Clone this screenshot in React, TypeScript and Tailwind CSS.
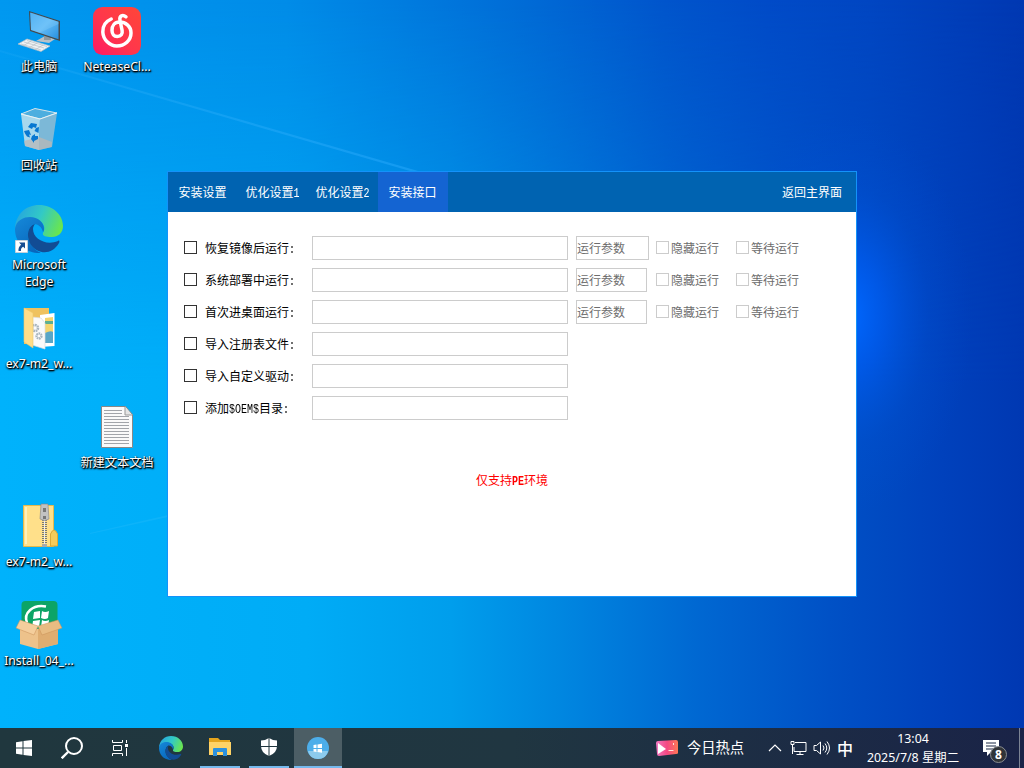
import React from "react";

type IconProps = { className?: string };

function Wallpaper() {
  return (
    <svg className="absolute inset-0 h-full w-full" viewBox="0 0 1024 768" preserveAspectRatio="none" aria-hidden="true">
      <defs>
        <linearGradient id="wTop" x1="0" x2="1" y1="0" y2="0">
          <stop offset="0" stopColor="#0098f0" />
          <stop offset="0.28" stopColor="#008ce8" />
          <stop offset="0.5" stopColor="#006dd7" />
          <stop offset="0.65" stopColor="#0055cc" />
          <stop offset="0.75" stopColor="#004bc8" />
          <stop offset="0.85" stopColor="#0046c2" />
          <stop offset="1" stopColor="#0038b2" />
        </linearGradient>
        <linearGradient id="wBottom" x1="0" x2="1" y1="0" y2="0">
          <stop offset="0" stopColor="#00b2fc" />
          <stop offset="0.3" stopColor="#00acf6" />
          <stop offset="0.44" stopColor="#009eec" />
          <stop offset="0.55" stopColor="#0086e0" />
          <stop offset="0.68" stopColor="#0068d2" />
          <stop offset="0.81" stopColor="#0051c6" />
          <stop offset="0.92" stopColor="#0041bc" />
          <stop offset="1" stopColor="#0038b2" />
        </linearGradient>
        <linearGradient id="wFade" x1="0" x2="0" y1="0" y2="1">
          <stop offset="0" stopColor="#000" />
          <stop offset="0.5" stopColor="#fff" />
        </linearGradient>
        <mask id="wMask"><rect width="1024" height="768" fill="url(#wFade)" /></mask>
        <radialGradient id="wGlow">
          <stop offset="0" stopColor="#0068ff" />
          <stop offset="0.3" stopColor="#0060fa" stopOpacity="0.6" />
          <stop offset="0.65" stopColor="#0056e0" stopOpacity="0.2" />
          <stop offset="1" stopColor="#0050d8" stopOpacity="0" />
        </radialGradient>
        <linearGradient id="wBeam" x1="0" x2="1" y1="0" y2="0">
          <stop offset="0" stopColor="#5cc4ff" stopOpacity="0.08" />
          <stop offset="1" stopColor="#2cacff" stopOpacity="0.45" />
        </linearGradient>
      </defs>
      <rect width="1024" height="768" fill="url(#wTop)" />
      <rect width="1024" height="768" fill="url(#wBottom)" mask="url(#wMask)" />
      <ellipse cx="848" cy="315" rx="125" ry="200" fill="url(#wGlow)" />
      <path d="M0 50 418 171H410L0 52Z" fill="url(#wBeam)" />
      <path d="M90 533 168 515V517L90 534Z" fill="#5cd0ff" opacity="0.14" />
    </svg>
  );
}

function ComputerIcon() {
  return (
    <svg viewBox="0 0 48 48" className="h-12 w-12">
      <defs><linearGradient id="pcS" x1="0" y1="0" x2="1" y2="1"><stop offset="0" stopColor="#3ba5ef" /><stop offset=".5" stopColor="#63bcf7" /><stop offset="1" stopColor="#268fe0" /></linearGradient></defs>
      <path d="m21 34 9-5 10 3-6 4Z" fill="#b9c1c7" /><path d="M29 26h6l1 7h-7Z" fill="#8f999f" />
      <path d="M14 4 45 14v20L15 24Z" fill="#43494d" /><path d="m15 5.500 28.500 9.200v17.600L16 23Z" fill="url(#pcS)" />
      <path d="m43.500 17-19 8.700L16 23V5.500l27.500 9.200Z" fill="#8bd0fb" opacity=".3" />
      <path d="m3 37 9-5 23 7-9 5.500Z" fill="#eef1f3" stroke="#b3bcc2" strokeWidth=".7" /><path d="m6 37 20 6M9 35l20 6M12 33.500l20 6M8 39l8-5m-2 7 8-5m-2 7 8-5" stroke="#b0b9bf" strokeWidth=".6" />
    </svg>
  );
}

function NeteaseIcon() {
  return (
    <svg viewBox="0 0 48 48" className="h-12 w-12">
      <defs><linearGradient id="ncG" x1="1" y1="0" x2="0" y2="1"><stop stopColor="#ff4638" /><stop offset=".55" stopColor="#ff364c" /><stop offset="1" stopColor="#ff1763" /></linearGradient></defs>
      <rect width="48" height="48" rx="9.500" fill="url(#ncG)" />
      <path d="M18.200 12C12.500 14.500 9.600 19.600 9.800 25c.3 7.500 6.700 14 14 14 8 0 14.200-5.700 14.200-13 0-7-5.700-10.900-11.500-10.900-5 0-7.500 4-7.500 8.100 0 3.800 2 6.300 5.200 6.300 3.800 0 5.600-2.700 4.900-6.200L27 13.500c-1-5 2.900-6 6-3.700" fill="none" stroke="#fff" strokeWidth="3.500" strokeLinecap="round" strokeLinejoin="round" />
    </svg>
  );
}

function BinIcon() {
  return (
    <svg viewBox="0 0 48 48" className="h-12 w-12">
      <path d="m6 8 14-5.500 22 4.500-17 6Z" fill="#4daedf" stroke="#d3e4ec" />
      <path d="m6 8 19 5-1 31-14-4Z" fill="#b5dced" opacity=".92" /><path d="m25 13 17-6-5 34-13 3Z" fill="#83b9d5" opacity=".95" />
      <path d="m9 35 15-4 13 5-.5 5-12.500 3-14-4Z" fill="#b9b8b7" opacity=".75" />
      <path d="m6 8 19 5 17-6" fill="none" stroke="#e9f2f5" />
      <g fill="#0878d1"><path d="m13 21 3-4 6 1-1 4-3-1-1 2Z" /><path d="m21 22 3-1-.5 6-4-2Z" /><path d="m9 25 5-1 2 5-2-.5 1 3-3-1-2-3Z" /><path d="m17 30 3-2v2h3v3l-4 2v2l-3-4Z" /></g>
    </svg>
  );
}

function EdgeMark({ className = "" }: IconProps) {
  const id = React.useId().replace(/:/g, "");
  return (
    <svg viewBox="0 0 48 48" className={className}>
      <defs>
        <linearGradient id={`${id}a`} x1="0" x2="1" y1=".3" y2=".6"><stop stopColor="#26a5df" /><stop offset=".5" stopColor="#32c9c6" /><stop offset="1" stopColor="#6be64c" /></linearGradient>
        <linearGradient id={`${id}b`} x1="0" x2=".6" y1="0" y2="1"><stop stopColor="#1689d9" /><stop offset="1" stopColor="#0867bd" /></linearGradient>
      </defs>
      <path d="M0 23C1 9 11 0 24 0c14 0 24 10 24 21 0 7-5 11-11 11-6 0-10-1-9-4 3-5 1-10-5-13C15 11 5 15 0 23Z" fill={`url(#${id}a)`} />
      <path d="M0 24C1 15 9 12 15 12c8 0 14 5 14 12 0 2-1 3-1 3-1-5-5-8-9-8-7 3-8 15-2 22 4 5 9 7 9 7C11 49 0 38 0 24Z" fill={`url(#${id}b)`} />
      <path d="M20 19c-8 2-9 14-4 21 8 10 21 10 28-2 1-2 0-3-1-2-12 5-25-2-25-12 0-2 1-4 2-5Z" fill="#124c94" />
    </svg>
  );
}

function EdgeShortcut() {
  return (
    <span className="relative block h-12 w-12">
      <EdgeMark className="h-12 w-12" />
      <svg viewBox="0 0 13 13" className="absolute bottom-0 left-0 h-[13px] w-[13px]"><path d="M.5.5h12v12H.5Z" fill="#fff" stroke="#c5d0db" /><path d="M4 2.500h6v6L8.200 6.800Q5.500 8 6 11H3.500Q3 7 6.200 4.700Z" fill="#174d91" /></svg>
    </span>
  );
}

function FolderIcon() {
  return (
    <svg viewBox="0 0 48 48" className="h-12 w-12">
      <path d="M9 4h25v36H9Z" fill="#efc25f" /><path d="M25 11 39.500 9v33L25 43Z" fill="#fff" /><path d="m30 14 8-1v26h-8Z" fill="#f5d56e" /><path d="M30 17h8v3h-8Z" fill="#5eaf90" /><path d="M30 29q6-3 8-1v11h-8Z" fill="#58a6c7" />
      <path d="M17 13 26 14l4 5v26l-13-4Z" fill="#fafafa" stroke="#ddd" strokeWidth=".7" /><circle cx="20" cy="24" r="3" fill="none" stroke="#a9b5be" strokeWidth="2.500" strokeDasharray="1.700 .6" /><circle cx="24" cy="32" r="2.500" fill="none" stroke="#a9b5be" strokeWidth="2.300" strokeDasharray="1.600 .6" />
      <path d="m9 4 9 5v35l-9-6Z" fill="#ffdd89" stroke="#edc66b" strokeWidth=".6" />
    </svg>
  );
}

function DocumentIcon() {
  return (
    <svg viewBox="0 0 48 48" className="h-12 w-12">
      <path d="M8.500 3.500h24l7 8v33h-31Z" fill="#fafafa" stroke="#888" /><path d="M32 4v8h7" fill="#e5e5e5" stroke="#999" />
      <path d="M11 7.500h18M11 10.500h18M11 13.500h25M11 16.500h25M11 19.500h25M11 22.500h25M11 25.500h25M11 28.500h25M11 31.500h25M11 34.500h25M11 37.500h25M11 40.500h25" stroke="#a2a5aa" />
    </svg>
  );
}

function ZipIcon() {
  return (
    <svg viewBox="0 0 48 48" className="h-12 w-12">
      <path d="M8.500 3.500h30v41h-30Z" fill="#ffe08a" stroke="#e5b94c" /><path d="M10 5h2v37h-2Z" fill="#fff0b7" /><path d="M35.500 44V32q3.500-8 7 0v12Z" fill="#f6cb59" stroke="#dda935" />
      <path d="M29.500 18v26" stroke="#777" strokeWidth="5" strokeDasharray="1 1" /><path d="M29.500 18v26" stroke="#eee" strokeWidth="1" />
      <path d="M26 2h7l1 15q-4.500 3-9 0Z" fill="#c2c2c2" stroke="#858585" strokeWidth=".6" /><path d="M28 6h3v4h-3Zm0 8h3v3h-3Z" fill="#777" /><path d="M27 42h5v3h-5Z" fill="#aaa" />
    </svg>
  );
}

function InstallIcon() {
  return (
    <svg viewBox="0 0 48 48" className="h-12 w-12">
      <rect x="6.500" width="36" height="36" rx="4" fill="#0ca466" /><path d="M12 22C8 12 18 3 31 5.500" fill="none" stroke="#fff" strokeWidth="2.500" />
      <path d="m19 11 6-1 0 7-7 1Zm8-1q3 2 7 0l-1 7q-3 2-7 0ZM18 20l7-1-1 7-7 1Zm9-1q3 2 7 0l-1 7q-3 2-7 0Z" fill="#fff" />
      <path d="M5 21 23 28l20-7v22l-20 5-18-5Z" fill="#edc28b" /><path d="m23 28 20-7v22l-20 5Z" fill="#dfad71" />
      <path d="m5 19 18 6-4 9-18-7Z" fill="#f4ce9c" stroke="#c99058" strokeWidth=".5" /><path d="m43 19-20 6 4 9 20-7Z" fill="#e8bc82" stroke="#c99058" strokeWidth=".5" />
    </svg>
  );
}

type Item = { label: string[]; left: string; top: string; icon: React.ReactNode };
const items: Item[] = [
  { label: ["此电脑"], left: "left-[-1px]", top: "top-2", icon: <ComputerIcon /> },
  { label: ["NeteaseCl..."], left: "left-[77px]", top: "top-2", icon: <NeteaseIcon /> },
  { label: ["回收站"], left: "left-[-1px]", top: "top-[107px]", icon: <BinIcon /> },
  { label: ["Microsoft", "Edge"], left: "left-[-1px]", top: "top-[206px]", icon: <EdgeShortcut /> },
  { label: ["ex7-m2_w..."], left: "left-[-1px]", top: "top-[305px]", icon: <FolderIcon /> },
  { label: ["新建文本文档"], left: "left-[77px]", top: "top-[404px]", icon: <DocumentIcon /> },
  { label: ["ex7-m2_w..."], left: "left-[-1px]", top: "top-[503px]", icon: <ZipIcon /> },
  { label: ["Install_04_..."], left: "left-[-1px]", top: "top-[602px]", icon: <InstallIcon /> },
];

function DesktopItem({ label, left, top, icon }: Item) {
  return (
    <div className={`absolute flex w-20 flex-col items-center ${left} ${top}`}>
      <div className="-mt-px mb-px">{icon}</div>
      <div className="mt-[2px] text-center font-['Noto_Sans','Noto_Sans_CJK_SC',sans-serif] text-[12.2px] leading-[17px] whitespace-nowrap text-white [text-shadow:0_1px_2px_#000,1px_1px_2px_#000,1px_1px_1px_#000]">
        {label.map((line) => <div key={line}>{line}</div>)}
      </div>
    </div>
  );
}

function Half({ children, className = "" }: { children: string; className?: string }) {
  return <span className={`inline-block origin-[50%_75%] scale-y-125 font-['Liberation_Mono',monospace] text-[10px] leading-none ${className}`}>{children}</span>;
}

function Box({ muted = false }: { muted?: boolean }) {
  return <span className={`block h-[13px] w-[13px] shrink-0 border bg-white ${muted ? "border-[#ccc]" : "border-[#333]"}`} />;
}

const rows: { label: React.ReactNode; param?: string }[] = [
  { label: "恢复镜像后运行", param: "w-[73px]" },
  { label: "系统部署中运行", param: "w-[71px]" },
  { label: "首次进桌面运行", param: "w-[71px]" },
  { label: "导入注册表文件" },
  { label: "导入自定义驱动" },
  { label: <>添加<Half>$OEM$</Half>目录</> },
];

const tabs: React.ReactNode[] = ["安装设置", <>优化设置<Half>1</Half></>, <>优化设置<Half>2</Half></>, "安装接口"];

function SettingsWindow() {
  return (
    <main className="absolute top-[171px] left-[167px] flex h-[426px] w-[690px] flex-col border border-[#1492fa] bg-white font-['Noto_Sans_CJK_SC',sans-serif] text-[12px]">
      <header className="flex h-10 shrink-0 items-center justify-between bg-[#0063b1] text-white">
        <nav className="flex h-full">
          {tabs.map((tab, i) => (
            <div key={i} className={`flex w-[70px] items-center justify-center pr-px whitespace-nowrap ${i === 3 ? "bg-[#1464d2]" : ""}`}><span>{tab}</span></div>
          ))}
        </nav>
        <span className="pr-[14px]">返回主界面</span>
      </header>
      <section className="flex flex-1 flex-col gap-2 px-4 pt-6">
        {rows.map(({ label, param }, i) => (
          <div key={i} className="flex h-6 items-center">
            <div className="flex w-32 shrink-0 items-center gap-2 whitespace-nowrap text-black">
              <span className="-mt-px"><Box /></span>
              <span>{label}<Half>:</Half></span>
            </div>
            <div className="h-6 w-64 shrink-0 border border-[#ccc]" />
            {param && (
              <div className="flex items-center text-[#6d6d6d]">
                <div className="ml-2 w-20">
                  <div className={`flex h-6 items-center border border-[#ccc] whitespace-nowrap ${param}`}>运行参数</div>
                </div>
                <div className="flex w-20 items-center gap-[2px]"><span className="-mt-px"><Box muted /></span>隐藏运行</div>
                <div className="flex w-20 items-center gap-[2px]"><span className="-mt-px"><Box muted /></span>等待运行</div>
              </div>
            )}
          </div>
        ))}
        <p className="mt-10 text-center leading-6 text-[#f00]">仅支持<Half className="font-bold">PE</Half>环境</p>
      </section>
    </main>
  );
}

function TaskButton({ children }: { children: React.ReactNode }) {
  return <div className="flex h-10 w-12 shrink-0 items-center justify-center">{children}</div>;
}

function Taskbar() {
  return (
    <footer className="absolute inset-x-0 bottom-0 flex h-10 justify-between bg-linear-to-r from-[#20373e] via-[#203641] via-50% to-[#1a2347] font-['Noto_Sans','Noto_Sans_CJK_SC',sans-serif] text-white">
      <div className="flex gap-px">
        <div className="flex">
          <TaskButton><svg viewBox="0 0 16 16" className="h-4 w-4"><path d="M0 2.200 6.500 1.300V7.500H0ZM7.500 1.100 16 0v7.500H7.500ZM0 8.500h6.500v6.200L0 13.800Zm7.500 0H16V16l-8.500-1.100Z" fill="#fff" /></svg></TaskButton>
          <TaskButton><svg viewBox="0 0 22 22" className="h-[22px] w-[22px]" fill="none" stroke="#fff" strokeWidth="2"><circle cx="13" cy="9" r="8" /><path d="m7 15-6.300 6.300" strokeWidth="2.400" /></svg></TaskButton>
          <TaskButton><svg viewBox="0 0 17 16" className="h-4 w-[17px]" fill="none" stroke="#fff"><path d="M.5 0v2.500h10V0M.5 16v-2.500h10V16M1.500 5.500h8v5h-8ZM14.500 0v3m0 5v8" /><path d="M13 4h3v3h-3Z" fill="#fff" stroke="none" /></svg></TaskButton>
          <div className="flex w-[55px] justify-center pt-2 pr-0.5"><EdgeMark className="h-6 w-6" /></div>
        </div>
        <div className="flex w-10 items-center justify-center border-b-2 border-[#76b9ed]">
          <svg viewBox="0 0 22 20" className="h-5 w-[22px]"><path d="M0 1h9l2 2h10v15H0Z" fill="#e5a51d" /><path d="M0 5h22v13H0Z" fill="#ffd366" /><path d="M4 19v-7q0-1 1-1h12q1 0 1 1v7h-4v-4H8v4Z" fill="#2c91dd" /></svg>
        </div>
        <div className="ml-2 flex w-10 items-center justify-center border-b-2 border-[#76b9ed]">
          <svg viewBox="0 0 18 18" className="h-[18px] w-[18px]"><path d="M9 0q4 2.500 8 2.500V8Q17 15 9 18 1 15 1 8V2.500Q5 2.500 9 0Z" fill="#fff" /><path d="M9 0v18M0 8.500h18" stroke="#20363f" /></svg>
        </div>
        <div className="ml-1 flex w-12 items-center justify-center border-b-2 border-[#76b9ed] bg-[#4c5e65] pt-0.5">
          <svg viewBox="0 0 22 22" className="h-[22px] w-[22px]"><circle cx="11" cy="11" r="11" fill="#4daeea" /><path d="M1 14h20c-1 5-5 8-10 8s-9-3-10-8Z" fill="#8ccbed" /><path d="m6.500 8 3-.5V11h-3Zm4-.6L15 6.800V11h-4.500ZM6.500 12h3v3l-3-.4Zm4 0H15v3.800l-4.500-.7Z" fill="#fff" /></svg>
        </div>
      </div>
      <div className="flex items-center">
        <svg viewBox="0 0 22 16" className="mr-[9px] h-4 w-[22px]"><defs><linearGradient id="hot"><stop stopColor="#f07ac4" /><stop offset=".5" stopColor="#f44882" /><stop offset="1" stopColor="#ff7755" /></linearGradient></defs><path d="M2 1 20 0q2 0 2 2v11q0 1-2 1L3 16q-2 0-2-2L0 3Q0 1 2 1Z" fill="url(#hot)" /><path d="m2 3 8 6-8 5Z" fill="#fff" /><path d="M17.500 3v2m-5 5.500h5" stroke="#ffe3da" /></svg>
        <span className="w-[81px] text-[14.300px] whitespace-nowrap">今日热点</span>
        <svg viewBox="0 0 14 8" className="h-2 w-[14px]" fill="none" stroke="#fff" strokeWidth="1.200"><path d="m1 7 6-6 6 6" /></svg>
        <svg viewBox="0 0 17 14" className="ml-2 h-[14px] w-[17px]" fill="none" stroke="#fff"><path d="M5 1.500h11v9H4V6M1 .5h3v3H1ZM2.500 4v9M10 10.500v3M6.500 13.500h7" /></svg>
        <svg viewBox="0 0 18 16" className="ml-[6px] h-4 w-[18px]" fill="none" stroke="#fff"><path d="M1 5.500h2.500l4-3.500v12l-4-3.500H1Z" /><path d="M10 5.500q2 2.500 0 5M12 3.500q3.500 4.500 0 9M14 1.500q5 6.500 0 13" /></svg>
        <span className="ml-[6px] pb-px font-['Noto_Sans_CJK_SC',sans-serif] text-[16px] font-medium">中</span>
        <div className="mr-3 ml-[13px] flex w-[94px] flex-col items-center text-[12.400px] leading-[19px] whitespace-nowrap"><span>13:04</span><span>2025/7/8 星期二</span></div>
        <div className="relative mr-3 ml-[3px] h-10 w-8">
          <svg viewBox="0 0 17 17" className="absolute top-[11px] left-2 h-[17px] w-[17px]"><path d="M0 1h16v12H8l-4 4v-4H0Z" fill="#fff" /><path d="M3 4h10M3 7h10M3 10h7" stroke="#1b2845" /></svg>
          <span className="absolute top-[18px] left-[15px] flex h-[17px] w-[17px] items-center justify-center rounded-full border border-[#8a8d91] bg-[#303438] text-[12px] leading-none font-bold">8</span>
        </div>
        <div className="mr-1 h-10 w-px bg-[#7c8494]" />
      </div>
    </footer>
  );
}

export default function App() {
  return (
    <div className="relative h-[768px] w-[1024px] overflow-hidden bg-[#009bed]">
      <Wallpaper />
      {items.map((item) => <DesktopItem key={item.top + item.left} {...item} />)}
      <SettingsWindow />
      <Taskbar />
    </div>
  );
}
